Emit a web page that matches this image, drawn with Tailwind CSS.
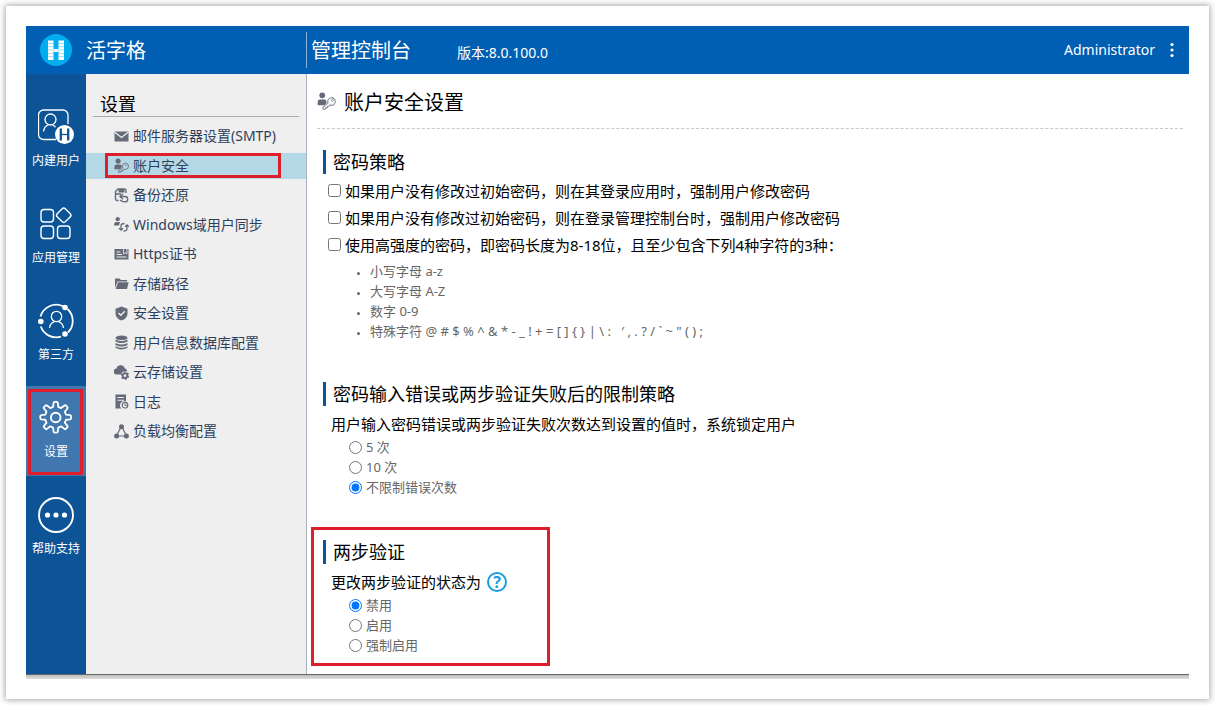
<!DOCTYPE html>
<html lang="zh-CN">
<head>
    <meta charset="UTF-8">
    <meta name="viewport" content="width=device-width, initial-scale=1.0">
    <title>活字格 管理控制台</title>
    <script src="https://cdn.jsdelivr.net/npm/@tailwindcss/browser@4"></script>
</head>
<body class="flex min-h-screen bg-white p-1.5 font-['Noto_Sans','Noto_Sans_CJK_SC',sans-serif] text-black">
<div class="flex flex-1 flex-col p-5 shadow-[0_0_6px_1px_rgba(0,0,0,0.35)]">

    <!-- Header -->
    <header class="flex h-12 items-center bg-[#005eb3] text-white">
        <a href="#" class="flex w-[280px] items-center gap-3.5 pl-3.5">
            <svg class="size-8" viewBox="0 0 32 32">
                <circle cx="16" cy="16" r="16" fill="#00adef"/>
                <g fill="#fff">
                    <rect x="8" y="6.500" width="5.500" height="19.500"/>
                    <rect x="18.500" y="6.500" width="5.500" height="19.500"/>
                    <rect x="13.500" y="15" width="5" height="3"/>
                </g>
                <path d="M8 9.500h5.500M8 12.700h5.500M8 16h5.500M8 19.300h5.500M8 22.600h5.500M18.500 9.500H24M18.500 12.700H24M18.500 16H24M18.500 19.300H24M18.500 22.600H24" stroke="#00adef" stroke-width=".4"/>
            </svg>
            <span class="pt-0.5 text-xl">活字格</span>
        </a>
        <div class="flex h-9 items-center border-l border-[#8fb4dc] pt-0.5 pl-1">
            <h1 class="w-[146px] text-xl">管理控制台</h1>
            <span class="pt-1 text-sm">版本:8.0.100.0</span>
        </div>
        <div class="ml-auto flex items-center gap-3 pr-3">
            <span class="text-sm">Administrator</span>
            <button type="button" aria-label="更多">
                <svg class="h-4 w-2.5" viewBox="0 0 10 16" fill="#fff">
                    <circle cx="5" cy="2.500" r="1.600"/><circle cx="5" cy="8" r="1.600"/><circle cx="5" cy="13.500" r="1.600"/>
                </svg>
            </button>
        </div>
    </header>

    <div class="flex flex-1 border-b border-[#666]">
        <!-- Main nav -->
        <nav class="flex w-[60px] shrink-0 flex-col gap-[7px] bg-[#0d5497] pt-[21px] text-xs leading-4 text-white">
            <a href="#" class="flex h-[90px] flex-col items-center gap-2 pt-3.5">
                <svg class="size-9" viewBox="0 0 36 36" fill="none" stroke="#fff" stroke-width="1.300">
                    <path d="M18 30.500H5.500a5 5 0 0 1-5-5V6a5 5 0 0 1 5-5H25a5 5 0 0 1 5 5v9"/>
                    <circle cx="12.500" cy="10.500" r="5.500"/>
                    <path d="M5.500 22.500c.5-3.500 2.500-6 5-6.700M14.500 15.800c1.500.6 2.500 1.500 3 2.500"/>
                    <circle cx="26.500" cy="25.500" r="9.500" fill="#fff" stroke="none"/>
                    <path d="M22.800 19.500v12M30.200 19.500v12" stroke="#0d5497" stroke-width="2.300"/>
                    <path d="M22.800 25.500h7.400" stroke="#0d5497" stroke-width="1.300"/>
                </svg>
                内建用户
            </a>
            <a href="#" class="flex h-[90px] flex-col items-center gap-2 pt-3.5">
                <svg class="size-9" viewBox="0 0 36 36" fill="none" stroke="#fff" stroke-width="1.400">
                    <rect x="3" y="3.500" width="12.500" height="12.500" rx="3"/>
                    <rect x="3" y="20" width="12.500" height="12.500" rx="3"/>
                    <rect x="19.500" y="20" width="12.500" height="12.500" rx="3"/>
                    <rect x="20" y="3.500" width="11.500" height="11.500" rx="2.500" transform="rotate(45 25.750 9.250)"/>
                </svg>
                应用管理
            </a>
            <a href="#" class="flex h-[90px] flex-col items-center gap-2 pt-3.5">
                <svg class="size-9" viewBox="0 0 36 36" fill="none" stroke="#fff" stroke-width="1.800">
                    <path d="M25 3.200A16.400 16.400 0 0 0 2.500 13.500M2.800 23.500A16.400 16.400 0 0 0 23 33.700M29.500 6A16.400 16.400 0 0 1 30 29.500"/>
                    <g fill="#fff" stroke="none"><circle cx="27" cy="4.500" r="2.800"/><circle cx="2.800" cy="18.500" r="2.800"/><circle cx="27" cy="31" r="2.800"/></g>
                    <circle cx="18.500" cy="13.500" r="5.200" stroke-width="1.300"/>
                    <path d="M11.500 25c.5-3.500 2.500-5.500 5-6.300M25.500 25c-.5-3.500-2.500-5.500-5-6.300" stroke-width="1.300"/>
                </svg>
                第三方
            </a>
            <a href="#" class="relative flex h-[90px] flex-col items-center gap-2 bg-[#3f77ae] pt-3.5">
                <svg class="size-9" viewBox="0 0 36 36" fill="none" stroke="#fff" stroke-width="1.900" stroke-linejoin="round">
                    <path d="M15.300 7.200 15.800 3q.2-1 1-1h2.400q.8 0 1 1l.5 4.200 3 1.300 3.400-2.700q.8-.6 1.400 0l1.700 1.700q.6.6 0 1.400l-2.700 3.400 1.300 3 4.200.5q1 .2 1 1v2.400q0 .8-1 1l-4.200.5-1.300 3 2.700 3.400q.6.8 0 1.400l-1.700 1.700q-.6.6-1.400 0l-3.400-2.700-3 1.300-.5 4.200q-.2 1-1 1h-2.400q-.8 0-1-1l-.5-4.200-3-1.300-3.400 2.700q-.8.6-1.400 0l-1.700-1.700q-.6-.6 0-1.400l2.700-3.400-1.300-3-4.200-.5q-1-.2-1-1v-2.400q0-.8 1-1l4.200-.5 1.300-3-2.700-3.400q-.6-.8 0-1.400l1.700-1.700q.6-.6 1.400 0l3.400 2.700z" transform="translate(.4 -.1) scale(.96)"/>
                    <circle cx="17.700" cy="17.500" r="4.800"/>
                </svg>
                设置
                <span class="absolute top-[3px] right-[3px] bottom-px left-0.5 border-3 border-[#de1f2b]"></span>
            </a>
            <a href="#" class="flex h-[90px] flex-col items-center gap-2 pt-3.5">
                <svg class="size-9" viewBox="0 0 36 36">
                    <circle cx="18" cy="18" r="17" fill="none" stroke="#fff" stroke-width="1.900"/>
                    <g fill="#fff"><circle cx="9.500" cy="18" r="2.600"/><circle cx="18" cy="18" r="2.600"/><circle cx="26.500" cy="18" r="2.600"/></g>
                </svg>
                帮助支持
            </a>
        </nav>

        <!-- Settings menu -->
        <aside class="w-[221px] shrink-0 border-r border-[#aab3bd] bg-[#efefef]">
            <h2 class="mx-[7px] flex h-[43px] items-end border-b border-[#a9adb3] pl-[7px] text-lg leading-6">设置</h2>
            <ul class="mt-1.5 flex h-[321px] flex-col justify-between text-sm text-[#2f3f5b]">
                <li>
                    <a href="#" class="flex h-[26px] items-center gap-1 pl-7">
                        <svg class="size-[15px]" viewBox="0 0 15 15"><path d="M.5 2.500h14v10H.5z" fill="#656a78"/><path d="m.5 3 7 5.500 7-5.500" fill="none" stroke="#efefef" stroke-width="1.300"/></svg>
                        邮件服务器设置(SMTP)
                    </a>
                </li>
                <li>
                    <a href="#" class="relative flex h-[26px] items-center gap-1 bg-[#b5d8e6] pl-7">
                        <svg class="size-[15px]" viewBox="0 0 20 20"><circle cx="5.500" cy="4" r="3.400" fill="#656a78"/><path d="M.5 15v-3.500q0-3 3-3h5q1.500 0 1.800 2.500v1L7.800 15z" fill="#656a78"/><path d="M11.600 12.500a4 4 0 1 1 2.200 2.200L12.500 16H11v1.500H9.500L8.500 19H6.300v-2z" fill="none" stroke="#7c818d" stroke-width="1.400"/><circle cx="16" cy="10" r="1" fill="#7c818d"/></svg>
                        账户安全
                        <span class="absolute top-0 right-[25px] bottom-px left-[19px] border-3 border-[#de1f2b]"></span>
                    </a>
                </li>
                <li>
                    <a href="#" class="flex h-[26px] items-center gap-1 pl-7">
                        <svg class="size-[15px]" viewBox="0 0 15 15" fill="none" stroke="#656a78" stroke-width="1.400"><path d="M4.500 12.500H3A1.500 1.500 0 0 1 1.500 11V3.500L4 1h6.500A1.500 1.500 0 0 1 12 2.500V5M1.500 6H7"/><path d="M4.500 1h6v3.500h-6z" fill="#656a78" stroke="none"/><path d="M6 8.500h5a2.700 2.700 0 0 1 0 5.400q-3 0-5-1.900M9 5.800 6 8.500l3 2.700"/></svg>
                        备份还原
                    </a>
                </li>
                <li>
                    <a href="#" class="flex h-[26px] items-center gap-1 pl-7">
                        <svg class="size-[15px]" viewBox="0 0 15 15"><circle cx="3.700" cy="2.200" r="2.100" fill="#656a78"/><path d="M.2 8.500V7.200q0-2.200 2-2.200H6L5 8.500z" fill="#656a78"/><path d="M7 13V9q0-2.500 3.500-2.500M13 8v3.500q0 2.500-3.500 2.500M5 11.200l2 2 2-2M11 9.800l2-2 2 2" fill="none" stroke="#656a78" stroke-width="1.300"/></svg>
                        Windows域用户同步
                    </a>
                </li>
                <li>
                    <a href="#" class="flex h-[26px] items-center gap-1 pl-7">
                        <svg class="size-[15px]" viewBox="0 0 15 15"><path d="M.5 2h14v10.500H.5z" fill="#656a78"/><path d="M2.500 5h4M2.500 7.500H8M2.500 10h10" stroke="#efefef" stroke-width="1.100"/><path d="M9.500 2v5l1.700-1.300L13 7V2" fill="#656a78" stroke="#efefef" stroke-width=".8"/></svg>
                        Https证书
                    </a>
                </li>
                <li>
                    <a href="#" class="flex h-[26px] items-center gap-1 pl-7">
                        <svg class="size-[15px]" viewBox="0 0 15 15" fill="#656a78"><path d="M1 12V2.500h4.500L7 4h6v1.500H3.500z"/><path d="M4 6.200h10.700L13 13H1.700z"/></svg>
                        存储路径
                    </a>
                </li>
                <li>
                    <a href="#" class="flex h-[26px] items-center gap-1 pl-7">
                        <svg class="size-[15px]" viewBox="0 0 15 15"><path d="m7.500.5 6 2.200V7c0 4-2.500 6.300-6 7.500C4 13.300 1.500 11 1.500 7V2.700z" fill="#656a78"/><path d="m4.500 7 2.300 2.300 4-4" fill="none" stroke="#efefef" stroke-width="1.400"/></svg>
                        安全设置
                    </a>
                </li>
                <li>
                    <a href="#" class="flex h-[26px] items-center gap-1 pl-7">
                        <svg class="size-[15px]" viewBox="0 0 15 15"><ellipse cx="7.500" cy="2.800" rx="6" ry="2.300" fill="#656a78"/><path d="M1.500 4.500q6 3 12 0v2q-6 3-12 0zM1.500 8q6 3 12 0v2q-6 3-12 0zM1.500 11.300q6 3 12 0v1.500q-6 3.500-12 0z" fill="#656a78"/></svg>
                        用户信息数据库配置
                    </a>
                </li>
                <li>
                    <a href="#" class="flex h-[26px] items-center gap-1 pl-7">
                        <svg class="size-[15px]" viewBox="0 0 15 15"><path d="M3 9.500a3 3 0 0 1-.5-6 4.300 4.300 0 0 1 8.200-.3 3 3 0 0 1 2.300 3.300H9L6.500 9.500z" fill="#656a78"/><circle cx="11" cy="10.700" r="2.300" fill="none" stroke="#656a78" stroke-width="1.800"/><circle cx="11" cy="10.700" r="3.600" fill="none" stroke="#656a78" stroke-width="1.400" stroke-dasharray="1.900 1.870"/></svg>
                        云存储设置
                    </a>
                </li>
                <li>
                    <a href="#" class="flex h-[26px] items-center gap-1 pl-7">
                        <svg class="size-[15px]" viewBox="0 0 15 15"><path d="M1.500.5h10.500v7a4.200 4.200 0 0 0-4.500 7H1.500z" fill="#656a78"/><path d="M3.500 3.500H10M3.500 6.200H10" stroke="#efefef" stroke-width="1.100"/><circle cx="11" cy="11.200" r="2.800" fill="none" stroke="#656a78" stroke-width="1.200"/><path d="M11 9.500v2h1.700" fill="none" stroke="#656a78"/></svg>
                        日志
                    </a>
                </li>
                <li>
                    <a href="#" class="flex h-[26px] items-center gap-1 pl-7">
                        <svg class="size-[15px]" viewBox="0 0 15 15" fill="#656a78"><circle cx="7.500" cy="2.800" r="2.500"/><circle cx="2.600" cy="12" r="2.500"/><circle cx="12.400" cy="12" r="2.500"/><path d="M7 3 2.500 12h10L8 3" fill="none" stroke="#656a78" stroke-width="1.200"/></svg>
                        负载均衡配置
                    </a>
                </li>
            </ul>
        </aside>

        <!-- Content -->
        <main class="min-w-0 flex-1 pr-1.5 pb-4 pl-2.5">
            <div class="flex h-[55px] items-center gap-2 border-b border-dashed border-[#c8c8c8] pt-1">
                <svg class="mb-1 size-[19px]" viewBox="0 0 20 20"><circle cx="5.500" cy="3.500" r="3" fill="#656a78"/><path d="M.7 14v-3.500q0-2.500 2.500-2.500h5q1.500 0 1.800 2.500v1L7.800 14z" fill="#656a78"/><path d="M11.600 11.500a4 4 0 1 1 2.200 2.200L12.500 15H11v1.500H9.500L8.500 18H6.300v-2z" fill="none" stroke="#8b8f99" stroke-width="1.200"/><circle cx="16.200" cy="8.800" r="1" fill="none" stroke="#8b8f99"/></svg>
                <h2 class="text-xl">账户安全设置</h2>
            </div>

            <section class="mt-[21px] ml-1.5">
                <h3 class="border-l-3 border-[#0d5497] pl-[7px] text-lg leading-6">密码策略</h3>
                <div class="mt-1 pl-[5px] text-[15px]">
                    <label class="flex h-[27px] items-center gap-1"><input type="checkbox" class="mb-0.5 size-[13px]">如果用户没有修改过初始密码，则在其登录应用时，强制用户修改密码</label>
                    <label class="flex h-[27px] items-center gap-1"><input type="checkbox" class="mb-0.5 size-[13px]">如果用户没有修改过初始密码，则在登录管理控制台时，强制用户修改密码</label>
                    <label class="flex h-[27px] items-center gap-1"><input type="checkbox" class="mb-0.5 size-[13px]">使用高强度的密码，即密码长度为8-18位，且至少包含下列4种字符的3种：</label>
                </div>
                <ul class="mt-0.5 list-disc pl-[47px] text-[13px] leading-5 text-[#666] marker:text-[9px]">
                    <li>小写字母 a-z</li>
                    <li>大写字母 A-Z</li>
                    <li>数字 0-9</li>
                    <li>特殊字符 @ # $ % ^ &amp; * - _ ! + = [ ] { } | \ : &nbsp; ′ , . ? / ` ~ " ( ) ;</li>
                </ul>
            </section>

            <section class="mt-[41px] ml-1.5">
                <h3 class="border-l-3 border-[#0d5497] pl-[7px] text-lg leading-6">密码输入错误或两步验证失败后的限制策略</h3>
                <p class="mt-2 pl-2 text-[15px] leading-5">用户输入密码错误或两步验证失败次数达到设置的值时，系统锁定用户</p>
                <div class="mt-1 pl-[26px] text-[13px] text-[#666]">
                    <label class="flex h-5 items-center gap-1"><input type="radio" name="limit" class="mb-0.5 size-[13px]">5 次</label>
                    <label class="flex h-5 items-center gap-1"><input type="radio" name="limit" class="mb-0.5 size-[13px]">10 次</label>
                    <label class="flex h-5 items-center gap-1"><input type="radio" name="limit" class="mb-0.5 size-[13px]" checked>不限制错误次数</label>
                </div>
            </section>

            <section class="relative mt-[42px] ml-1.5">
                <h3 class="border-l-3 border-[#0d5497] pl-[7px] text-lg leading-6">两步验证</h3>
                <div class="mt-2 flex items-center gap-1.5 pl-2 text-[15px] leading-5">
                    更改两步验证的状态为
                    <button type="button" aria-label="帮助" class="flex size-5 items-center justify-center rounded-full border-2 border-[#169fdc] text-base leading-4 font-bold text-[#169fdc]">?</button>
                </div>
                <div class="mt-1 pl-[26px] text-[13px] text-[#666]">
                    <label class="flex h-5 items-center gap-1"><input type="radio" name="twostep" class="mb-0.5 size-[13px]" checked>禁用</label>
                    <label class="flex h-5 items-center gap-1"><input type="radio" name="twostep" class="mb-0.5 size-[13px]">启用</label>
                    <label class="flex h-5 items-center gap-1"><input type="radio" name="twostep" class="mb-0.5 size-[13px]">强制启用</label>
                </div>
                <div class="pointer-events-none absolute -top-[13px] -bottom-2.5 -left-3 w-[239px] border-3 border-[#de1f2b]"></div>
            </section>
        </main>
    </div>
    <div class="h-1 bg-gradient-to-b from-[#bdbdbd] to-[#dedede]"></div>
</div>
</body>
</html>
